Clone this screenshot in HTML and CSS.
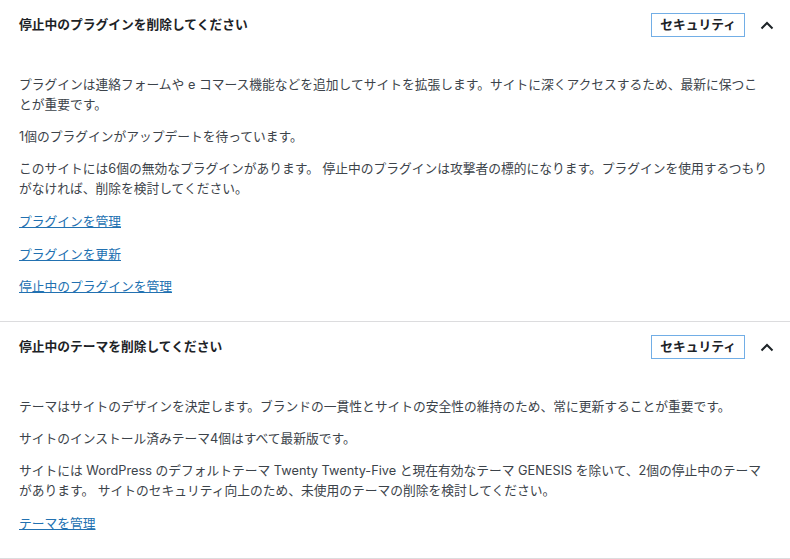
FILE: index.html
```html
<!DOCTYPE html>
<html lang="ja">
<head>
    <meta charset="UTF-8">
    <title>サイトヘルス</title>
    <link rel="stylesheet" href="styles.css">
</head>
<body>
    <div class="accordion">
        <!-- inactive plugins -->
        <div class="section">
            <div class="section-header">
                <h4 class="section-title">停止中のプラグインを削除してください</h4>
                <div class="header-right">
                    <span class="badge">セキュリティ</span>
                    <svg class="chevron" width="14" height="9" viewBox="0 0 14 9"><polyline points="1.5,7.5 7,2 12.5,7.5" /></svg>
                </div>
            </div>
            <div class="section-panel">
                <p>プラグインは連絡フォームや e コマース機能などを追加してサイトを拡張します。サイトに深くアクセスするため、最新に保つことが重要です。</p>
                <p>1個のプラグインがアップデートを待っています。</p>
                <p>このサイトには6個の無効なプラグインがあります。 停止中のプラグインは攻撃者の標的になります。プラグインを使用するつもりがなければ、削除を検討してください。</p>
                <div class="links">
                    <a href="#">プラグインを管理</a>
                    <a href="#">プラグインを更新</a>
                    <a href="#">停止中のプラグインを管理</a>
                </div>
            </div>
        </div>

        <!-- inactive themes -->
        <div class="section">
            <div class="section-header">
                <h4 class="section-title">停止中のテーマを削除してください</h4>
                <div class="header-right">
                    <span class="badge">セキュリティ</span>
                    <svg class="chevron" width="14" height="9" viewBox="0 0 14 9"><polyline points="1.5,7.5 7,2 12.5,7.5" /></svg>
                </div>
            </div>
            <div class="section-panel">
                <p>テーマはサイトのデザインを決定します。ブランドの一貫性とサイトの安全性の維持のため、常に更新することが重要です。</p>
                <p>サイトのインストール済みテーマ4個はすべて最新版です。</p>
                <p>サイトには WordPress のデフォルトテーマ Twenty Twenty-Five と現在有効なテーマ GENESIS を除いて、2個の停止中のテーマがあります。 サイトのセキュリティ向上のため、未使用のテーマの削除を検討してください。</p>
                <div class="links">
                    <a href="#">テーマを管理</a>
                </div>
            </div>
        </div>
    </div>
</body>
</html>
```

FILE: styles.css
```css
body {
    margin: 0;
    padding: 0;
    background: #fff;
    color: #3c434a;
    font-family: Inter, "Noto Sans CJK JP", sans-serif;
    font-size: 12.75px;
    line-height: 20px;
}

.section {
    border-bottom: 1px solid #dcdcde;
}

.section-header {
    height: 50px;
    padding: 0 16px 0 19px;
    display: flex;
    align-items: center;
    justify-content: space-between;
}

.section-title {
    margin: 0;
    font-size: 12.75px;
    font-weight: bold;
    color: #1d2327;
}

.header-right {
    display: flex;
    align-items: center;
    gap: 15px;
}

.badge {
    height: 22px;
    padding: 0 8px;
    border: 1px solid #72aee6;
    display: flex;
    align-items: center;
    font-weight: bold;
    color: #1d2327;
}

.chevron polyline {
    fill: none;
    stroke: #1d2327;
    stroke-width: 2;
}

.section-panel {
    padding: 25px 21px 24px 19px;
}

.section-panel p {
    margin: 0 0 12px;
}

.links {
    padding-top: 1px;
    display: flex;
    flex-direction: column;
    align-items: flex-start;
    gap: 12.5px;
}

.links a {
    color: #2271b1;
    text-decoration: underline;
}
```
